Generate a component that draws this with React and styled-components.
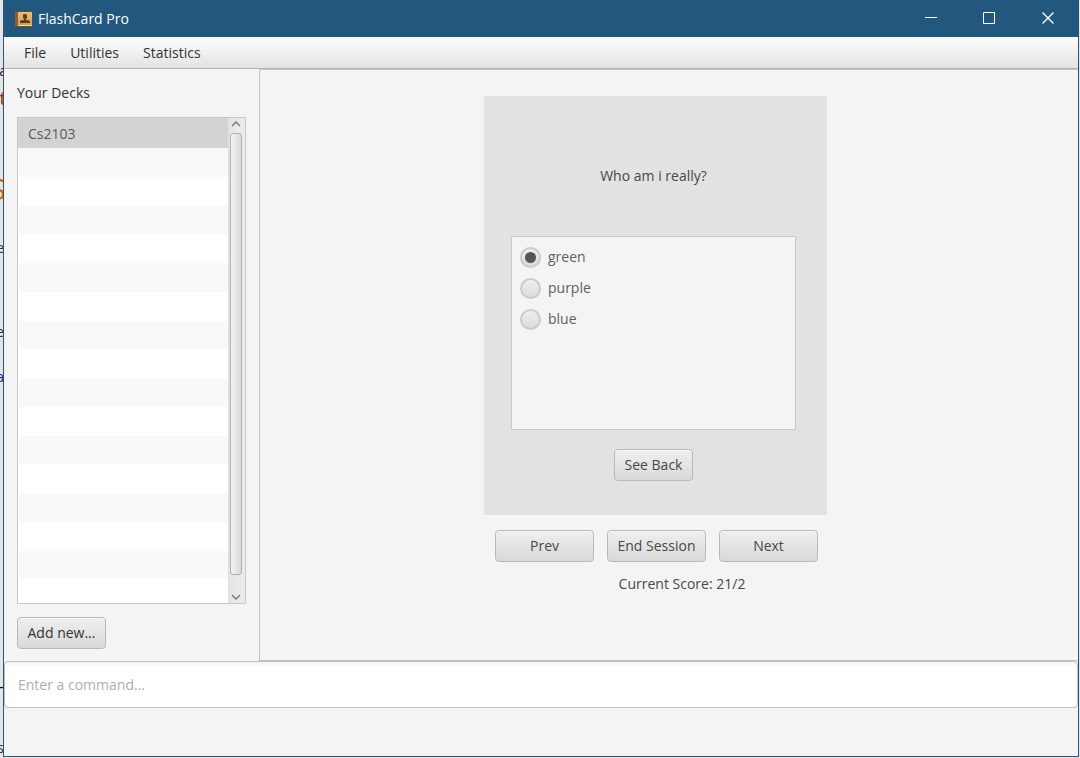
import React, { useState } from "react";
import styled, { createGlobalStyle } from "styled-components";

const GlobalStyle = createGlobalStyle`
  *, *::before, *::after { box-sizing: border-box; }
  body {
    margin: 0;
    background: #e6e5e4;
    color: #333;
    font: 14px/20px "Open Sans", "Noto Sans", sans-serif;
  }
  button, input { font: inherit; color: inherit; }
`;

const Desktop = styled.div`
  position: relative;
  display: flex;
  min-height: 100vh;
  padding: 0 1px 1px 3px;
  overflow: hidden;
`;

const Backdrop = styled.div`
  position: absolute;
  top: 0;
  bottom: 0;
  left: 0;
  width: 4px;
  overflow: hidden;
`;

const Fragment = styled.span`
  position: absolute;
  right: ${(p) => p.$right}px;
  top: ${(p) => p.$top}px;
  color: ${(p) => p.$color};
  font-size: ${(p) => p.$size}px;
  line-height: 20px;
`;

const Window = styled.div`
  position: relative;
  flex: 1;
  display: flex;
  flex-direction: column;
  border: solid #22577e;
  border-width: 0 1px 1px;
  background: #f4f4f4;
`;

const TitleBar = styled.header`
  display: flex;
  align-items: center;
  height: 37px;
  padding-left: 11px;
  background: #22577e;
  color: #fff;
`;

const Title = styled.h1`
  flex: 1;
  margin: 0 0 0 5px;
  font-size: 14px;
  font-weight: 400;
`;

const WindowButton = styled.button`
  display: grid;
  place-items: center;
  width: 59px;
  height: 37px;
  padding: 0;
  border: 0;
  background: none;
  color: #fff;
`;

const MenuBar = styled.nav`
  display: flex;
  align-items: center;
  height: 32px;
  padding: 0 8px;
  border-bottom: 1px solid #b5b5b5;
  background: linear-gradient(#fdfdfd, #e3e3e3);
`;

const MenuButton = styled.button`
  padding: 0 12px;
  border: 0;
  background: none;
`;

const Main = styled.main`
  flex: 1;
  display: flex;
`;

const Sidebar = styled.aside`
  display: flex;
  flex-direction: column;
  align-items: flex-start;
  width: 255px;
  padding: 14px 13px 12px;
`;

const Heading = styled.h2`
  margin: 0 0 14px;
  font-size: 14px;
  font-weight: 400;
`;

const DeckBox = styled.div`
  flex: 1;
  display: flex;
  width: 100%;
  margin-bottom: 13px;
  border: 1px solid #c8c8c8;
  background: #fff;
`;

const DeckList = styled.ul`
  flex: 1;
  display: flex;
  flex-direction: column;
  margin: 0;
  padding: 0;
  list-style: none;
`;

const DeckRow = styled.li`
  flex: ${(p) => (p.$partial ? 24 : 29)};
  margin-left: 1px;
  background: ${(p) => (p.$striped ? "#f9f9f9" : "#fff")};
`;

const SelectedDeck = styled.li`
  height: 30px;
  padding: 6px 10px 4px;
  background: #d3d3d3;
  color: #5a5a5a;
`;

const ScrollBar = styled.div`
  display: flex;
  flex-direction: column;
  align-items: center;
  width: 17px;
  padding-right: 2px;
  border-left: 1px solid #dedede;
  background: linear-gradient(90deg, #e4e4e4, #ececec);
`;

const ScrollButton = styled.button`
  display: grid;
  place-items: center;
  width: 14px;
  height: ${(p) => (p.$end ? 28 : 15)}px;
  padding: ${(p) => (p.$end ? "15px 0 0" : "0 0 3px")};
  border: 0;
  background: none;
`;

const ScrollThumb = styled.div`
  flex: 1;
  width: 12px;
  border: 1px solid #b0b0b0;
  border-radius: 3px;
  background: linear-gradient(90deg, #f4f4f4, #dadada);
`;

const Button = styled.button`
  width: ${(p) => p.$width}px;
  height: 32px;
  padding: 0;
  border: 1px solid #b9b9b9;
  border-radius: 4px;
  background: linear-gradient(#efefef, #d9d9d9);
  box-shadow: inset 0 1px #f8f8f8;
  color: ${(p) => (p.$strong ? "#333" : "#484848")};
  white-space: nowrap;
`;

const Stage = styled.section`
  flex: 1;
  display: flex;
  flex-direction: column;
  align-items: center;
  padding: 26px 27px 0 0;
  border: solid #c2c2c2;
  border-width: 1px 0 1px 1px;
  color: #484848;
`;

const Card = styled.article`
  display: flex;
  flex-direction: column;
  align-items: center;
  width: 343px;
  padding: 70px 31px 34px 27px;
  background: #e2e2e2;
`;

const Question = styled.p`
  margin: 0 0 50px;
`;

const Options = styled.fieldset`
  display: flex;
  flex-direction: column;
  gap: 11px;
  width: 100%;
  height: 194px;
  margin: 0 0 19px;
  padding: 10px 8px;
  border: 1px solid #c8c8c8;
  background: #f4f4f4;
`;

const Option = styled.label`
  display: flex;
  align-items: center;
  gap: 7px;
  height: 20px;
  color: #606060;
`;

const Radio = styled.input`
  appearance: none;
  display: grid;
  place-items: center;
  width: 21px;
  height: 21px;
  margin: 0;
  border: 2px solid #cbcbcb;
  border-radius: 50%;
  background: linear-gradient(#eee, #dcdcdc);

  &:checked::before {
    content: "";
    width: 11px;
    height: 11px;
    border-radius: 50%;
    background: #555;
  }
`;

const Actions = styled.div`
  display: flex;
  gap: 13px;
  margin: 15px 0 12px 2px;
`;

const Score = styled.p`
  margin: 0;
  padding-left: 53px;
`;

const Command = styled.input`
  height: 47px;
  padding: 0 13px;
  border: 1px solid #c0c0c0;
  border-radius: 4px;
  background: linear-gradient(#f4f4f4, #fff 6px);
  outline: 0;

  &::placeholder { color: #aeaeae; opacity: 1; }
`;

const StatusArea = styled.footer`
  height: 48px;
`;

const fragments = [
  { text: "a", top: 61, right: -3, size: 14, color: "#222" },
  { text: "t", top: 88, right: -2, size: 18, color: "#8a2b10" },
  { text: "S", top: 179, right: -2, size: 30, color: "#d2660f" },
  { text: "e", top: 238, right: 0, size: 14, color: "#333" },
  { text: "e", top: 322, right: 0, size: 14, color: "#333" },
  { text: "a", top: 367, right: 0, size: 14, color: "#1a1a80" },
  { text: "-", top: 676, right: 0, size: 18, color: "#111" },
  { text: "s", top: 738, right: 0, size: 14, color: "#333" },
];

const AppIcon = () => (
  <svg width="18" height="18" viewBox="0 0 18 18" aria-hidden="true">
    <defs>
      <linearGradient id="cover" x1="0" y1="0" x2="0" y2="1">
        <stop offset="0" stopColor="#edc077" />
        <stop offset="1" stopColor="#d3a04c" />
      </linearGradient>
    </defs>
    <path d="M1 1h16v16H1z" fill="#6b4c2a" />
    <path d="M0 2h3v14H0z" fill="#8b6036" />
    <path d="M3 2h14v13H3z" fill="url(#cover)" />
    <path d="M3 15h14v1H3z" fill="#efdcb4" />
    <path d="M8 5q0-1 2-1t2 1v3l-1 1v1q3 0 4 1v2H5v-2q1-1 4-1V9L8 8z" fill="#5b4022" />
  </svg>
);

const Chevron = ({ down }) => (
  <svg width="10" height="6" viewBox="0 0 10 6" fill="none" stroke="#777" strokeWidth="1.4" aria-hidden="true">
    <path d={down ? "M1 1l4 4 4-4" : "M1 5l4-4 4 4"} />
  </svg>
);

const WindowGlyph = ({ d, weight = 1 }) => (
  <svg width="13" height="13" viewBox="0 0 13 13" fill="none" stroke="currentColor" strokeWidth={weight} aria-hidden="true">
    <path d={d} />
  </svg>
);

export default function App() {
  const [answer, setAnswer] = useState("green");

  return (
    <>
      <GlobalStyle />
      <Desktop>
        <Backdrop aria-hidden="true">
          {fragments.map((f) => (
            <Fragment key={f.top} $top={f.top} $right={f.right} $size={f.size} $color={f.color}>
              {f.text}
            </Fragment>
          ))}
        </Backdrop>
        <Window>
          <TitleBar>
            <AppIcon />
            <Title>FlashCard Pro</Title>
            <WindowButton aria-label="Minimize"><WindowGlyph d="M1 5.500h12" /></WindowButton>
            <WindowButton aria-label="Maximize"><WindowGlyph d="M.5.5h11v11H.5z" /></WindowButton>
            <WindowButton aria-label="Close"><WindowGlyph weight={1.4} d="M.5.5l11 11M11.500.5l-11 11" /></WindowButton>
          </TitleBar>
          <MenuBar>
            <MenuButton>File</MenuButton>
            <MenuButton>Utilities</MenuButton>
            <MenuButton>Statistics</MenuButton>
          </MenuBar>
          <Main>
            <Sidebar>
              <Heading>Your Decks</Heading>
              <DeckBox>
                <DeckList>
                  <SelectedDeck>Cs2103</SelectedDeck>
                  {Array.from({ length: 16 }, (_, i) => (
                    <DeckRow key={i} $striped={i % 2 === 0} $partial={i === 15} />
                  ))}
                </DeckList>
                <ScrollBar>
                  <ScrollButton aria-label="Scroll up"><Chevron /></ScrollButton>
                  <ScrollThumb />
                  <ScrollButton $end aria-label="Scroll down"><Chevron down /></ScrollButton>
                </ScrollBar>
              </DeckBox>
              <Button $width={89} $strong>Add new...</Button>
            </Sidebar>
            <Stage>
              <Card>
                <Question>Who am i really?</Question>
                <Options aria-label="Answers">
                  {["green", "purple", "blue"].map((name) => (
                    <Option key={name}>
                      <Radio
                        type="radio"
                        name="answer"
                        value={name}
                        checked={answer === name}
                        onChange={() => setAnswer(name)}
                      />
                      {name}
                    </Option>
                  ))}
                </Options>
                <Button $width={79}>See Back</Button>
              </Card>
              <Actions>
                <Button $width={99}>Prev</Button>
                <Button $width={99}>End Session</Button>
                <Button $width={99}>Next</Button>
              </Actions>
              <Score>Current Score: 21/2</Score>
            </Stage>
          </Main>
          <Command type="text" placeholder="Enter a command..." aria-label="Command" />
          <StatusArea />
        </Window>
      </Desktop>
    </>
  );
}
